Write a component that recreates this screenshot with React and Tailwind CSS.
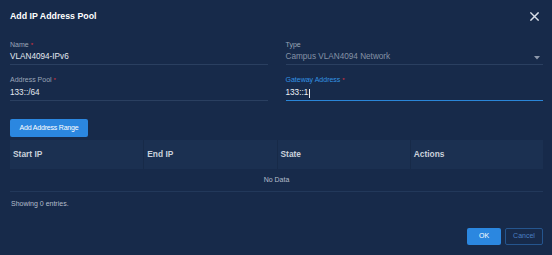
export default function App() {
  return (
    <div
      className="w-[552px] h-[255px] bg-[#172a4a] overflow-hidden flex flex-col"
      style={{ fontFamily: '"Liberation Sans", Arial, sans-serif' }}
    >
      {/* Header */}
      <div className="h-[32px] shrink-0 flex items-center justify-between pl-[10px] pr-[13px]">
        <div className="text-[8.8px] font-bold text-white leading-none">Add IP Address Pool</div>
        <svg width="9" height="9" viewBox="0 0 10 10" className="text-[#d8dee8]">
          <path d="M1 1 L9 9 M9 1 L1 9" stroke="currentColor" strokeWidth="1.6" strokeLinecap="square" />
        </svg>
      </div>

      {/* Form */}
      <div className="grid grid-cols-2 gap-x-[18px] pl-[10px] pr-[9px]">
        {/* Name */}
        <div className="flex flex-col">
          <div className="mt-[8px] h-[9px] leading-[9px] text-[7px] text-[#9aa5b8]">
            Name <span className="text-[#e0323c] text-[6px]">*</span>
          </div>
          <div className="mt-[2px] h-[14px] flex items-center border-b border-[#2a3f60] text-[8.2px] text-[#e4e9f0]">
            VLAN4094-IPv6
          </div>
        </div>
        {/* Type */}
        <div className="flex flex-col">
          <div className="mt-[8px] h-[9px] leading-[9px] text-[7px] text-[#9aa5b8]">Type</div>
          <div className="mt-[2px] h-[14px] flex items-center justify-between border-b border-[#2a3f60] text-[8.2px] text-[#8592a6]">
            <span>Campus VLAN4094 Network</span>
            <svg width="6" height="4" viewBox="0 0 6 4" className="mr-[3px]">
              <path d="M0 0 L6 0 L3 3.5 Z" fill="#8d98ab" />
            </svg>
          </div>
        </div>
        {/* Address Pool */}
        <div className="flex flex-col">
          <div className="mt-[10px] h-[9px] leading-[9px] text-[7px] text-[#9aa5b8]">
            Address Pool <span className="text-[#e0323c] text-[6px]">*</span>
          </div>
          <div className="mt-[3px] h-[14px] flex items-center border-b border-[#2a3f60] text-[8.2px] text-[#e4e9f0]">
            133::/64
          </div>
        </div>
        {/* Gateway */}
        <div className="flex flex-col">
          <div className="mt-[10px] h-[9px] leading-[9px] text-[7px] text-[#3393e4]">
            Gateway Address <span className="text-[#e0323c] text-[6px]">*</span>
          </div>
          <div className="mt-[3px] h-[14px] flex items-center border-b border-[#2a86d8] text-[8.2px] text-[#eef2f7]">
            <span>133::1</span>
            <span className="ml-[1px] w-[1px] h-[9px] bg-[#e8edf3]"></span>
          </div>
        </div>
      </div>

      {/* Add button */}
      <div className="pl-[10px] mt-[18px]">
        <div className="w-[78px] h-[18px] rounded-[2px] bg-[#2b87e0] flex items-center justify-center text-[7px] text-white tracking-[-0.2px]">
          Add Address Range
        </div>
      </div>

      {/* Table */}
      <div className="ml-[10px] mr-[9px] mt-[3px]">
        <div className="grid grid-cols-4 h-[29px] bg-[#1b3051]">
          <div className="flex items-center pl-[3px] text-[8.4px] font-bold text-[#c9d0db]">Start IP</div>
          <div className="flex items-center pl-[3px] border-l border-[#172a48] text-[8.4px] font-bold text-[#c9d0db]">End IP</div>
          <div className="flex items-center pl-[3px] border-l border-[#172a48] text-[8.4px] font-bold text-[#c9d0db]">State</div>
          <div className="flex items-center pl-[3px] border-l border-[#172a48] text-[8.4px] font-bold text-[#c9d0db]">Actions</div>
        </div>
        <div className="h-[23px] flex items-center justify-center border-b border-[#22385a] text-[7px] text-[#b4bdca]">
          No Data
        </div>
      </div>

      <div className="pl-[11px] mt-[7px] h-[10px] leading-[10px] text-[7px] text-[#b4bdca]">Showing 0 entries.</div>

      {/* Footer buttons */}
      <div className="mt-[19px] flex justify-end gap-[4px] pr-[9px]">
        <div className="w-[34px] h-[17px] rounded-[2px] bg-[#2b87e0] flex items-center justify-center text-[7px] text-white">
          OK
        </div>
        <div className="w-[38px] h-[17px] rounded-[2px] border border-[#25558e] flex items-center justify-center text-[7px] text-[#4a7fc0]">
          Cancel
        </div>
      </div>
    </div>
  );
}
